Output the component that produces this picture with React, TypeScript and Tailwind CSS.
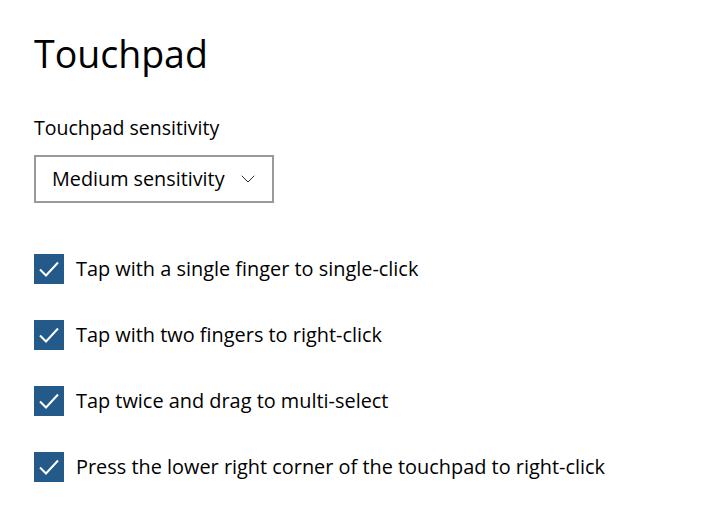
import { ChevronDown } from "lucide-react";

const OPTIONS = [
  "Tap with a single finger to single-click",
  "Tap with two fingers to right-click",
  "Tap twice and drag to multi-select",
  "Press the lower right corner of the touchpad to right-click",
];

function CheckBox() {
  return (
    <span className="flex h-[30px] w-[30px] shrink-0 items-center justify-center bg-[#235a8a]">
      <svg width="22" height="22" viewBox="0 0 22 22" fill="none">
        <path d="M2 11.5 L8 17.5 L20 4.5" stroke="#fff" strokeWidth="2" />
      </svg>
    </span>
  );
}

export default function App() {
  return (
    <div className="min-h-[514px] w-[718px] bg-white px-[34px] pt-[26px] font-['Open_Sans',sans-serif] text-black">
      <h1 className="text-[37.5px] leading-[56px] font-normal">Touchpad</h1>

      <p className="mt-[33px] text-[19.5px] leading-[26px]">Touchpad sensitivity</p>

      <div className="mt-[14px] flex h-[48px] w-[240px] items-center justify-between border-2 border-[#999999] pr-[12px] pl-[16px]">
        <span className="text-[19.8px]">Medium sensitivity</span>
        <ChevronDown size={24} strokeWidth={1} className="text-[#333]" />
      </div>

      <div className="mt-[51px] flex flex-col gap-[36px]">
        {OPTIONS.map((label) => (
          <div key={label} className="flex h-[30px] items-center gap-[12px]">
            <CheckBox />
            <span className="text-[19.9px]">{label}</span>
          </div>
        ))}
      </div>
    </div>
  );
}
